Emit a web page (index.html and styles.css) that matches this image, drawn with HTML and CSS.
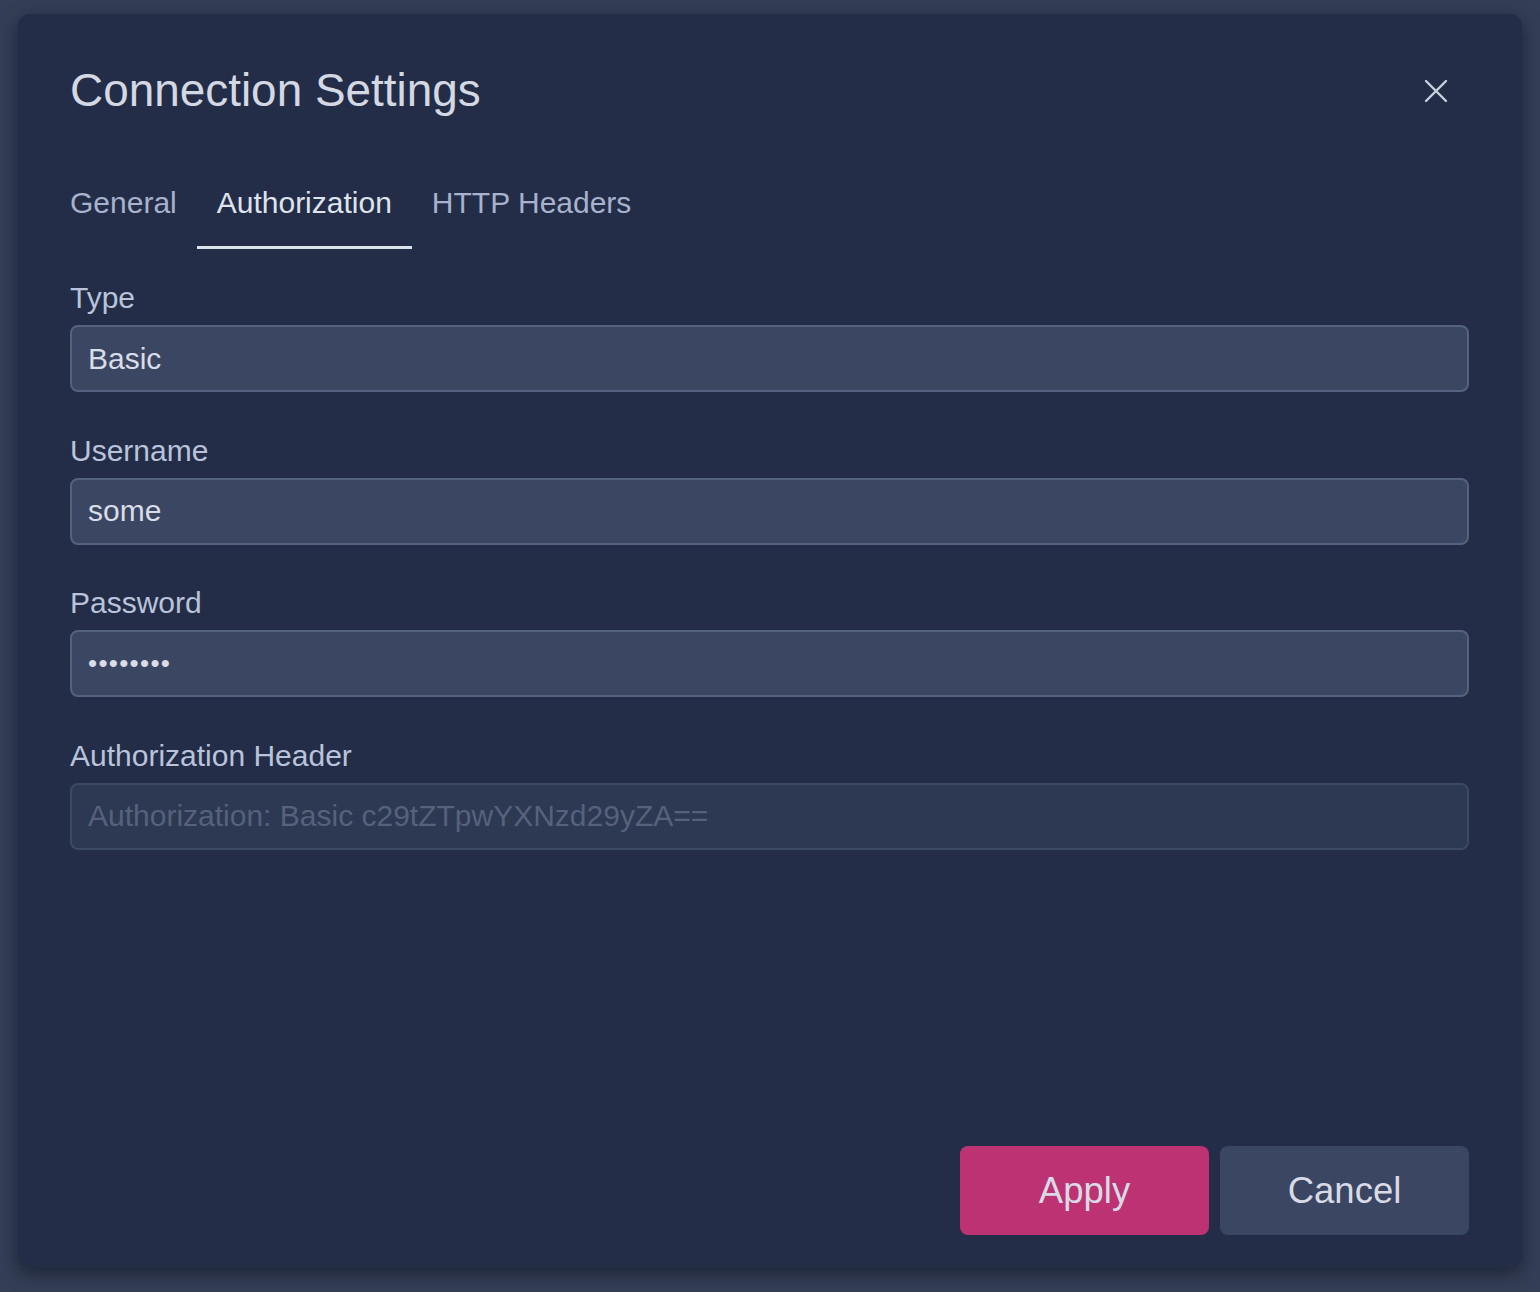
FILE: index.html
```html
<!DOCTYPE html>
<html>
<head>
<meta charset="utf-8">
<link rel="stylesheet" href="styles.css">
</head>
<body>
<div class="backdrop">
  <div class="dialog">
    <div class="header">
      <h1 class="title">Connection Settings</h1>
      <button class="close" aria-label="Close">
        <svg width="24" height="24" viewBox="0 0 24 24"><path d="M2 2L22 22M22 2L2 22" stroke="#c9cfdc" stroke-width="2.4" stroke-linecap="round" fill="none"/></svg>
      </button>
    </div>
    <div class="tabs">
      <div class="tab">General</div>
      <div class="tab active">Authorization</div>
      <div class="tab">HTTP Headers</div>
    </div>
    <div class="form">
      <div class="field">
        <label class="label">Type</label>
        <div class="input">Basic</div>
      </div>
      <div class="field">
        <label class="label">Username</label>
        <div class="input">some</div>
      </div>
      <div class="field">
        <label class="label">Password</label>
        <div class="input password">••••••••</div>
      </div>
      <div class="field">
        <label class="label">Authorization Header</label>
        <div class="input disabled">Authorization: Basic c29tZTpwYXNzd29yZA==</div>
      </div>
    </div>
    <div class="footer">
      <button class="btn primary">Apply</button>
      <button class="btn secondary">Cancel</button>
    </div>
  </div>
</div>
</body>
</html>
```
FILE: styles.css
```css
html, body {
  margin: 0;
  padding: 0;
  background: #333d55;
  font-family: "Liberation Sans", Arial, sans-serif;
}
.backdrop {
  width: 1540px;
  height: 1292px;
  padding: 14px 0 0 18px;
  box-sizing: border-box;
  background: #343e56;
}
.dialog {
  width: 1504px;
  height: 1253px;
  box-sizing: border-box;
  background: #232d47;
  border-radius: 12px;
  box-shadow: 0 6px 18px rgba(10, 14, 26, 0.55);
  padding: 0 53px 0 52px;
  display: flex;
  flex-direction: column;
}
.header {
  display: flex;
  align-items: center;
  justify-content: space-between;
  height: 154px;
}
.title {
  margin: -2px 0 0 0;
  font-weight: normal;
  font-size: 45.9px;
  color: #d3d8e3;
}
.close {
  background: none;
  border: none;
  padding: 0;
  margin-right: 21px;
  width: 24px;
  height: 24px;
  display: flex;
}
.tabs {
  display: flex;
  margin-left: -20px;
  margin-top: 5px;
}
.tab {
  padding: 0 20px;
  font-size: 30px;
  color: #a7b2cd;
  height: 76px;
  line-height: 60px;
  box-sizing: border-box;
  border-bottom: 3px solid transparent;
}
.tab.active {
  color: #dfe3ec;
  border-bottom-color: #dde1ea;
}
.form {
  display: flex;
  flex-direction: column;
  gap: 40.5px;
  margin-top: 31px;
}
.field {
  display: flex;
  flex-direction: column;
}
.label {
  font-size: 30px;
  color: #b9c3db;
  line-height: 36px;
  margin-bottom: 9px;
}
.input {
  height: 67px;
  box-sizing: border-box;
  background: #3b4663;
  border: 2px solid #56617f;
  border-radius: 8px;
  padding: 0 16px;
  font-size: 30px;
  color: #d9dde7;
  display: flex;
  align-items: center;
}
.input.password {
  font-size: 26px;
  letter-spacing: 1.3px;
}
.input.disabled {
  background: #2d3852;
  border-color: #3d4863;
  color: #56617b;
}
.footer {
  margin-top: auto;
  display: flex;
  justify-content: flex-end;
  gap: 11px;
  padding-bottom: 32px;
}
.btn {
  width: 249px;
  height: 89px;
  border: none;
  border-radius: 8px;
  font-family: "Liberation Sans", Arial, sans-serif;
  font-size: 36.5px;
  color: #d8dbe6;
}
.btn.primary {
  background: #bc3272;
}
.btn.secondary {
  background: #3b4663;
}
```
